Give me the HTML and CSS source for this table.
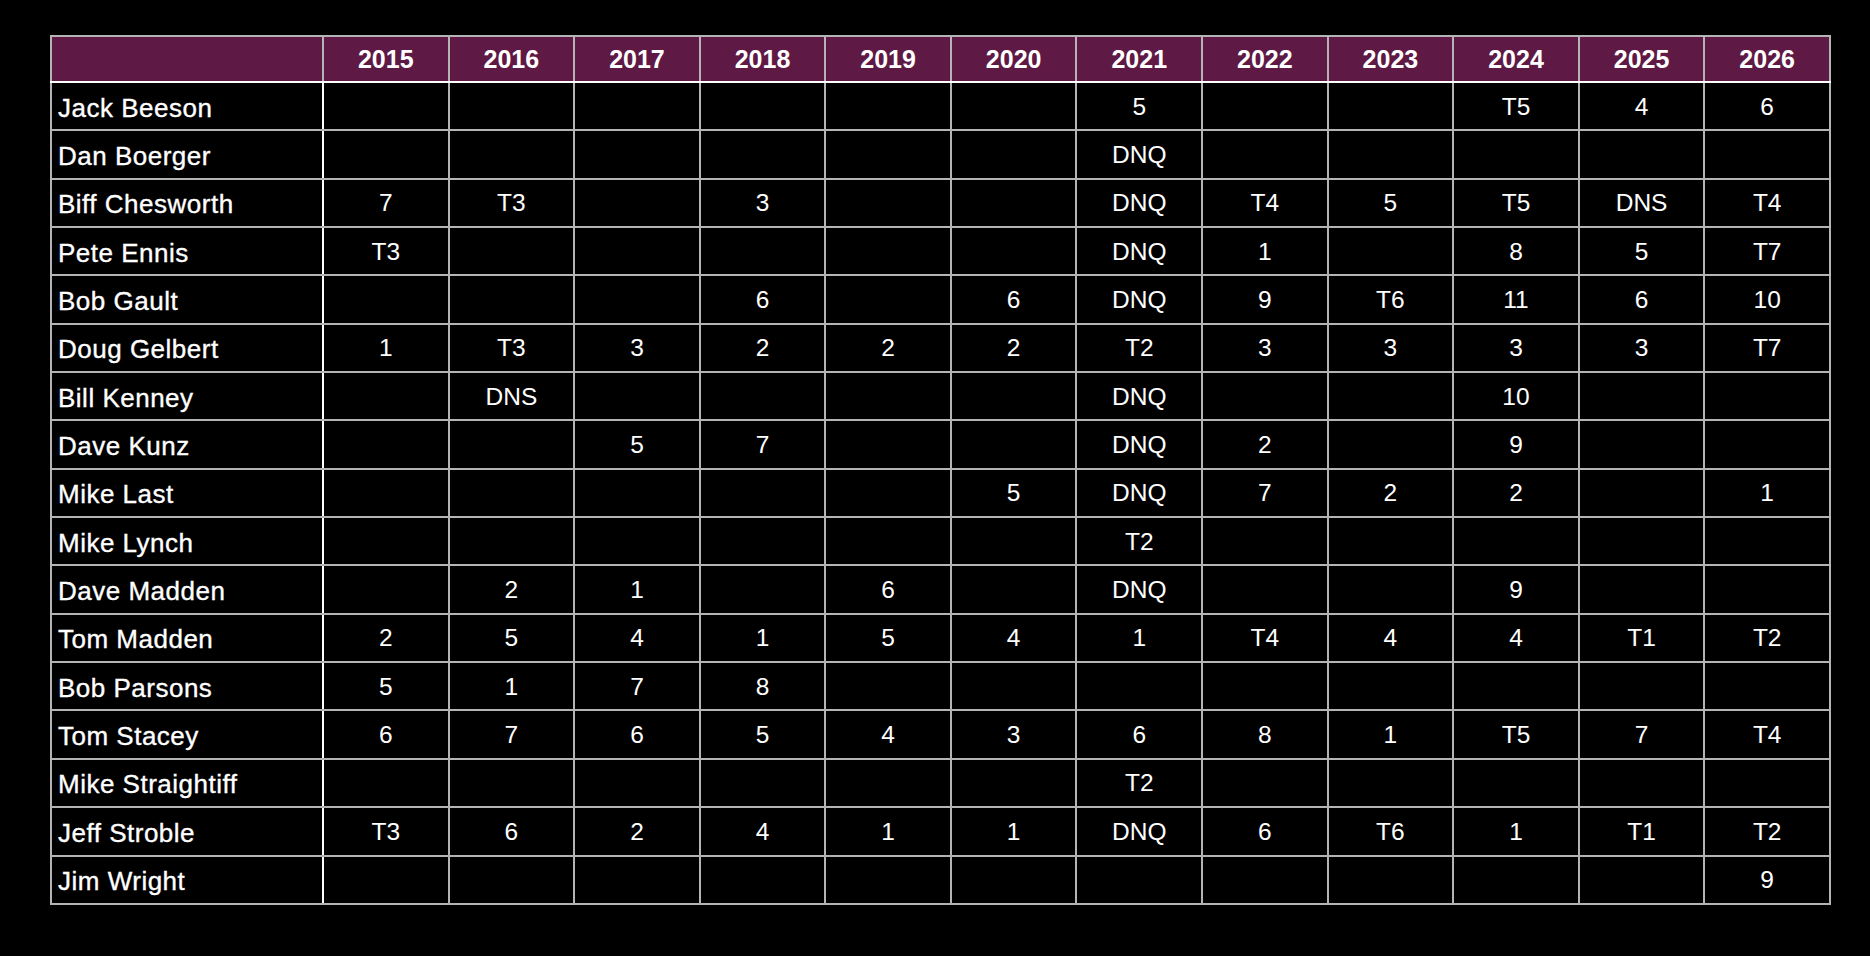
FILE: index.html
```html
<!DOCTYPE html>
<html lang="en">
<head>
<meta charset="utf-8">
<title>Results</title>
<link rel="stylesheet" href="styles.css">
</head>
<body>
<table class="results">
  <colgroup>
    <col class="col-name">
    <col span="12">
  </colgroup>
  <thead>
    <tr class="head-row">
      <th class="corner"></th>
      <th>2015</th><th>2016</th><th>2017</th><th>2018</th><th>2019</th><th>2020</th>
      <th>2021</th><th>2022</th><th>2023</th><th>2024</th><th>2025</th><th>2026</th>
    </tr>
  </thead>
  <tbody>
    <tr><td class="name">Jack Beeson</td><td></td><td></td><td></td><td></td><td></td><td></td><td>5</td><td></td><td></td><td>T5</td><td>4</td><td>6</td></tr>
    <tr><td class="name">Dan Boerger</td><td></td><td></td><td></td><td></td><td></td><td></td><td>DNQ</td><td></td><td></td><td></td><td></td><td></td></tr>
    <tr><td class="name">Biff Chesworth</td><td>7</td><td>T3</td><td></td><td>3</td><td></td><td></td><td>DNQ</td><td>T4</td><td>5</td><td>T5</td><td>DNS</td><td>T4</td></tr>
    <tr><td class="name">Pete Ennis</td><td>T3</td><td></td><td></td><td></td><td></td><td></td><td>DNQ</td><td>1</td><td></td><td>8</td><td>5</td><td>T7</td></tr>
    <tr><td class="name">Bob Gault</td><td></td><td></td><td></td><td>6</td><td></td><td>6</td><td>DNQ</td><td>9</td><td>T6</td><td>11</td><td>6</td><td>10</td></tr>
    <tr><td class="name">Doug Gelbert</td><td>1</td><td>T3</td><td>3</td><td>2</td><td>2</td><td>2</td><td>T2</td><td>3</td><td>3</td><td>3</td><td>3</td><td>T7</td></tr>
    <tr><td class="name">Bill Kenney</td><td></td><td>DNS</td><td></td><td></td><td></td><td></td><td>DNQ</td><td></td><td></td><td>10</td><td></td><td></td></tr>
    <tr><td class="name">Dave Kunz</td><td></td><td></td><td>5</td><td>7</td><td></td><td></td><td>DNQ</td><td>2</td><td></td><td>9</td><td></td><td></td></tr>
    <tr><td class="name">Mike Last</td><td></td><td></td><td></td><td></td><td></td><td>5</td><td>DNQ</td><td>7</td><td>2</td><td>2</td><td></td><td>1</td></tr>
    <tr><td class="name">Mike Lynch</td><td></td><td></td><td></td><td></td><td></td><td></td><td>T2</td><td></td><td></td><td></td><td></td><td></td></tr>
    <tr><td class="name">Dave Madden</td><td></td><td>2</td><td>1</td><td></td><td>6</td><td></td><td>DNQ</td><td></td><td></td><td>9</td><td></td><td></td></tr>
    <tr><td class="name">Tom Madden</td><td>2</td><td>5</td><td>4</td><td>1</td><td>5</td><td>4</td><td>1</td><td>T4</td><td>4</td><td>4</td><td>T1</td><td>T2</td></tr>
    <tr><td class="name">Bob Parsons</td><td>5</td><td>1</td><td>7</td><td>8</td><td></td><td></td><td></td><td></td><td></td><td></td><td></td><td></td></tr>
    <tr><td class="name">Tom Stacey</td><td>6</td><td>7</td><td>6</td><td>5</td><td>4</td><td>3</td><td>6</td><td>8</td><td>1</td><td>T5</td><td>7</td><td>T4</td></tr>
    <tr><td class="name">Mike Straightiff</td><td></td><td></td><td></td><td></td><td></td><td></td><td>T2</td><td></td><td></td><td></td><td></td><td></td></tr>
    <tr><td class="name">Jeff Stroble</td><td>T3</td><td>6</td><td>2</td><td>4</td><td>1</td><td>1</td><td>DNQ</td><td>6</td><td>T6</td><td>1</td><td>T1</td><td>T2</td></tr>
    <tr><td class="name">Jim Wright</td><td></td><td></td><td></td><td></td><td></td><td></td><td></td><td></td><td></td><td></td><td></td><td>9</td></tr>
  </tbody>
</table>
</body>
</html>
```

FILE: styles.css
```css
html, body {
  margin: 0;
  padding: 0;
  background: #000;
}

body {
  padding: 35px 0 0 50px;
  font-family: "Liberation Sans", Arial, Helvetica, sans-serif;
  color: #fff;
}

.results {
  border-collapse: collapse;
  table-layout: fixed;
  width: 1781px;
  border: 2px solid #b4b4b4;
}

.col-name {
  width: 272px;
}

.results th,
.results td {
  border: 2px solid #b4b4b4;
  padding: 0;
  text-align: center;
  vertical-align: middle;
  white-space: nowrap;
}

.head-row {
  height: 46px;
}

.results th {
  background: #5e1944;
  font-size: 25px;
  font-weight: bold;
  border-bottom-color: #ffffff;
  padding-top: 1px;
}

.results tbody tr {
  height: 48.35px;
}

.results td {
  font-size: 24.5px;
  font-weight: normal;
  padding-top: 1px;
}

.results td.name {
  text-align: left;
  padding-left: 6px;
  padding-top: 4px;
  font-size: 26px;
  letter-spacing: 0.5px;
  -webkit-text-stroke: 0.35px #fff;
  border-right-color: #ffffff;
}
```
